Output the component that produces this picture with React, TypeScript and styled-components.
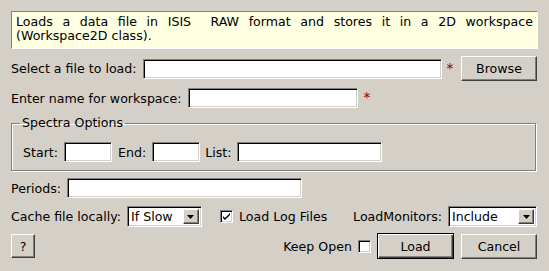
import React, { FC, useState } from "react";
import styled, { createGlobalStyle } from "styled-components";

const GlobalStyle = createGlobalStyle`
  html, body {
    margin: 0;
    padding: 0;
    background: #d4d0c8;
  }
  body {
    font-family: "DejaVu Sans", "Liberation Sans", sans-serif;
    font-size: 12.6px;
    color: #000;
  }
`;

const Dialog = styled.div`
  width: 549px;
  height: 271px;
  box-sizing: border-box;
  padding: 11px 12px 0 11px;
  display: flex;
  flex-direction: column;
`;

const Description = styled.div`
  height: 38px;
  box-sizing: border-box;
  padding: 3px 4px 0 4px;
  background: #ffffe1;
  border: 1px solid;
  border-color: #808080 #ffffff #ffffff #808080;
  line-height: 14px;
  margin-right: -1px;
`;

const JustifiedLine = styled.div`
  text-align: justify;
  text-align-last: justify;
`;

const Row = styled.div<{ $top: number; $height: number }>`
  display: flex;
  align-items: center;
  margin-top: ${(p) => p.$top}px;
  height: ${(p) => p.$height}px;
`;

const Label = styled.span<{ $left?: number }>`
  white-space: nowrap;
  margin-left: ${(p) => p.$left ?? 0}px;
  margin-right: 6px;
`;

const sunken = `
  border: 1px solid;
  border-color: #808080 #ffffff #ffffff #808080;
  box-shadow: inset 1px 1px 0 #000000, inset -1px -1px 0 #d4d0c8;
`;

const TextInput = styled.input<{ $width: number }>`
  width: ${(p) => p.$width}px;
  height: 20px;
  box-sizing: border-box;
  ${sunken}
  background: #ffffff;
  padding: 0 3px;
  font: inherit;
  outline: none;
`;

const Required = styled.span<{ $gap: number }>`
  color: #8b0000;
  font-size: 13.5px;
  margin-left: ${(p) => p.$gap}px;
  width: 8px;
  position: relative;
  top: -1px;
`;

const Button = styled.button<{ $width: number; $height?: number; $default?: boolean; $gap?: number }>`
  width: ${(p) => p.$width}px;
  height: ${(p) => p.$height ?? 25}px;
  margin-left: ${(p) => p.$gap ?? 0}px;
  box-sizing: border-box;
  background: #d4d0c8;
  font: inherit;
  color: #000;
  padding: 0;
  border: 1px solid;
  border-color: ${(p) =>
    p.$default ? "#000000" : "#ffffff #404040 #404040 #ffffff"};
  box-shadow: ${(p) =>
    p.$default
      ? "inset 1px 1px 0 #ffffff, inset -1px -1px 0 #404040, inset -2px -2px 0 #808080"
      : "inset -1px -1px 0 #808080"};
  cursor: pointer;
`;

const Spacer = styled.div`
  flex: 1;
`;

const GroupBox = styled.fieldset`
  margin: 8px 1px 0 0;
  padding: 12px 11px 8px 11px;
  border: 1px solid #808080;
  box-shadow: 1px 1px 0 #ffffff, inset 1px 1px 0 #ffffff;
  min-width: 0;
`;

const GroupTitle = styled.legend`
  margin-left: -3px;
  padding: 0 2px;
  line-height: 14px;
`;

const GroupRow = styled.div`
  display: flex;
  align-items: center;
  height: 20px;
`;

const Combo = styled.div<{ $width: number }>`
  width: ${(p) => p.$width}px;
  height: 21px;
  box-sizing: border-box;
  ${sunken}
  background: #ffffff;
  display: flex;
  align-items: center;
  padding: 2px 2px 2px 3px;
`;

const ComboValue = styled.span`
  flex: 1;
  white-space: nowrap;
`;

const ComboArrow = styled.span`
  width: 16px;
  height: 15px;
  box-sizing: border-box;
  background: #d4d0c8;
  border: 1px solid;
  border-color: #ffffff #404040 #404040 #ffffff;
  box-shadow: inset -1px -1px 0 #808080;
  display: flex;
  align-items: center;
  justify-content: center;
`;

const CheckBox = styled.span<{ $left: number }>`
  width: 13px;
  height: 13px;
  box-sizing: border-box;
  ${sunken}
  background: #ffffff;
  margin-left: ${(p) => p.$left}px;
  margin-right: 6px;
  display: inline-flex;
  align-items: center;
  justify-content: center;
  cursor: pointer;
`;

const Arrow: FC = () => (
  <svg width="7" height="4" viewBox="0 0 7 4">
    <path d="M0 0h7L3.5 4z" fill="#000" />
  </svg>
);

const Tick: FC = () => (
  <svg width="9" height="9" viewBox="0 0 9 9">
    <path d="M1 4l2 2 5-5v2l-5 5-2-2z" fill="#000" />
  </svg>
);

const App: FC = () => {
  const [loadLogs, setLoadLogs] = useState(true);
  const [keepOpen, setKeepOpen] = useState(false);

  return (
    <>
      <GlobalStyle />
      <Dialog>
        <Description>
          <JustifiedLine>
            Loads a data file in ISIS&nbsp; RAW format and stores it in a 2D
            workspace
          </JustifiedLine>
          <div>(Workspace2D class).</div>
        </Description>

        <Row $top={7} $height={25}>
          <Label>Select a file to load:</Label>
          <TextInput $width={299} />
          <Required $gap={5}>*</Required>
          <Spacer />
          <Button $width={76}>Browse</Button>
        </Row>

        <Row $top={7} $height={20}>
          <Label>Enter name for workspace:</Label>
          <TextInput $width={170} />
          <Required $gap={6}>*</Required>
        </Row>

        <GroupBox>
          <GroupTitle>Spectra Options</GroupTitle>
          <GroupRow>
            <Label>Start:</Label>
            <TextInput $width={48} />
            <Label $left={6}>End:</Label>
            <TextInput $width={48} />
            <Label $left={5}>List:</Label>
            <TextInput $width={145} />
          </GroupRow>
        </GroupBox>

        <Row $top={7} $height={20}>
          <Label>Periods:</Label>
          <TextInput $width={235} />
        </Row>

        <Row $top={8} $height={21}>
          <Label>Cache file locally:</Label>
          <Combo $width={75}>
            <ComboValue>If Slow</ComboValue>
            <ComboArrow>
              <Arrow />
            </ComboArrow>
          </Combo>
          <CheckBox $left={18} onClick={() => setLoadLogs(!loadLogs)}>
            {loadLogs && <Tick />}
          </CheckBox>
          <span>Load Log Files</span>
          <Spacer />
          <Label>LoadMonitors:</Label>
          <Combo $width={89}>
            <ComboValue>Include</ComboValue>
            <ComboArrow>
              <Arrow />
            </ComboArrow>
          </Combo>
        </Row>

        <Row $top={6} $height={26}>
          <Button $width={24} $height={24}>
            ?
          </Button>
          <Spacer />
          <span>Keep Open</span>
          <CheckBox $left={6} onClick={() => setKeepOpen(!keepOpen)}>
            {keepOpen && <Tick />}
          </CheckBox>
          <Button $width={77} $height={26} $default>
            Load
          </Button>
          <Button $width={76} $gap={7}>
            Cancel
          </Button>
        </Row>
      </Dialog>
    </>
  );
};

export default App;
